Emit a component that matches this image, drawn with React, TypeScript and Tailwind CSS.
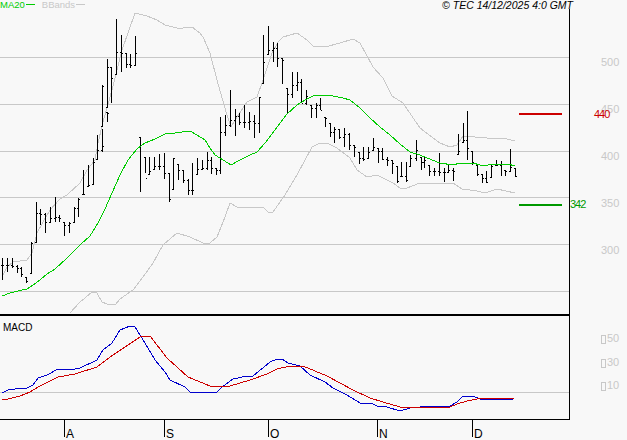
const FONT = "font-['Liberation_Sans',Arial,sans-serif]";

/* x, high, low, close */
const BARS: number[][] = [
  [2, 258, 280, 265], [7, 258, 272, 265], [12, 258, 268, 266], [17, 265, 273, 268], [21, 267, 277, 274], [26, 277, 283, 281],
  [31, 242, 274, 243], [36, 202, 243, 213], [40, 209, 225, 214], [45, 213, 233, 222], [50, 207, 223, 218], [55, 197, 222, 217],
  [59, 215, 222, 218], [64, 222, 236, 225], [69, 222, 233, 223], [74, 207, 223, 208], [78, 198, 217, 199], [83, 170, 195, 194],
  [88, 165, 187, 185], [93, 158, 185, 162], [97, 135, 160, 150], [102, 129, 152, 146], [102, 85, 127, 86], [107, 112, 122, 113],
  [107, 59, 108, 67], [111, 67, 103, 78], [116, 19, 75, 52], [121, 35, 72, 53], [126, 53, 68, 64], [130, 54, 68, 65], [135, 36, 66, 53],
  [140, 137, 192, 145], [145, 157, 173, 178], [149, 157, 175, 171], [154, 157, 170, 166], [159, 154, 170, 166], [164, 153, 179, 173],
  [169, 173, 202, 199], [173, 158, 190, 158], [178, 164, 180, 170], [183, 170, 183, 180], [188, 179, 195, 190], [192, 163, 195, 190],
  [197, 158, 175, 169], [202, 160, 170, 168], [207, 152, 170, 160],
  [211, 157, 174, 168], [216, 168, 175, 170], [220, 117, 174, 132], [225, 115, 136, 125], [230, 90, 127, 120], [235, 109, 136, 116],
  [239, 113, 125, 122], [244, 105, 128, 122], [249, 112, 130, 121], [254, 115, 138, 123], [259, 97, 133, 97], [263, 35, 84, 62],
  [268, 26, 55, 50], [273, 42, 62, 48], [277, 43, 67, 58], [282, 58, 84, 60], [287, 88, 114, 94], [292, 72, 98, 85], [297, 72, 91, 82],
  [301, 79, 103, 103], [306, 90, 105, 96], [311, 105, 118, 108], [316, 103, 118, 105], [320, 98, 110, 110], [325, 117, 127, 118],
  [330, 123, 137, 132], [334, 127, 143, 129], [339, 129, 139, 137], [344, 128, 147, 134], [349, 133, 150, 145], [354, 145, 157, 147],
  [359, 152, 164, 158], [363, 147, 161, 159], [368, 147, 159, 152], [373, 138, 151, 147], [378, 148, 163, 151], [382, 148, 160, 159],
  [387, 157, 166, 160], [392, 160, 174, 163], [397, 166, 183, 181], [401, 162, 177, 176], [406, 162, 182, 180], [410, 155, 167, 158],
  [416, 140, 161, 150], [421, 157, 170, 162], [424, 157, 168, 160], [429, 165, 176, 171], [434, 168, 176, 171], [439, 153, 176, 172],
  [444, 168, 182, 172], [448, 165, 173, 170], [453, 168, 181, 171], [458, 134, 155, 151], [463, 123, 143, 140], [467, 111, 160, 148],
  [472, 151, 165, 162], [477, 165, 176, 174], [482, 174, 183, 178], [486, 171, 183, 182], [491, 165, 178, 166], [496, 160, 166, 165],
  [501, 161, 176, 164], [505, 170, 176, 171], [510, 149, 172, 167], [515, 168, 177, 176],
];

const MA20 = "2,296 10,293 18,291 27,289 33,285 40,280 47,274 55,269 67,258 80,245 90,236 98,223 105,209 112,193 120,175 128,160 137,149 145,143 155,139 165,134 175,133 190,131 197,135 205,140 210,148 215,155 220,158 231,165 240,160 250,155 257,152 265,143 275,130 287,114 297,105 307,99 313,96 323,95 333,96 343,98 350,100 360,108 370,118 380,127 390,135 400,144 410,152 420,155 427,158 440,163 453,165 460,163 473,163 480,165 488,165 495,164 508,164 515,166";
const BB_UP = "2,277 7,267 13,262 27,260 32,253 37,233 43,222 50,210 60,199 67,195 80,183 87,170 95,160 98,143 103,122 112,90 122,50 135,13 147,16 157,20 165,25 177,28 183,28 192,27 200,33 203,37 210,53 217,80 227,115 231,127 237,117 247,102 257,97 263,80 272,53 278,42 283,37 297,33 307,40 313,46 325,47 340,43 353,39 360,43 373,67 383,78 392,96 403,103 420,128 440,143 450,147 457,145 463,136 487,138 503,138 515,141";
const BB_LOW = "70,313 80,302 85,298 92,292 97,293 102,302 107,304 115,305 120,299 133,290 143,277 153,263 163,245 177,233 190,237 203,243 210,243 217,237 225,217 230,203 237,207 250,208 263,207 268,212 273,212 285,195 297,175 305,160 312,147 320,143 327,143 337,148 350,158 357,170 367,177 377,175 393,183 400,188 407,188 420,183 440,183 453,183 462,189 477,191 485,193 497,189 515,193";
const MACD_BLUE = "2,393 8,390 15,389 27,388 33,385 38,378 47,375 58,369 70,370 80,368 97,360 103,350 112,343 120,330 130,326 135,327 145,343 155,360 165,372 170,380 185,387 190,392 217,392 222,387 233,379 247,376 253,376 270,362 277,359 282,359 288,363 300,366 310,375 325,382 333,388 347,395 360,403 373,404 377,406 387,407 400,411 410,408 420,407 450,406 457,402 462,397 473,396 480,399 513,399";
const MACD_RED = "2,399 8,399 20,396 30,392 38,387 58,377 75,374 97,367 110,357 128,345 140,337 150,336 167,358 188,377 210,386 217,387 230,386 250,380 267,374 277,369 290,366 303,366 327,376 353,390 370,398 383,402 400,407 420,407 450,407 457,404 467,401 477,399 515,398";

const MONTHS = [
  { label: "A", width: "w-[100px]" },
  { label: "S", width: "w-[104px]" },
  { label: "O", width: "w-[109px]" },
  { label: "N", width: "w-[95px]" },
  { label: "D", width: "w-[60px]" },
];

function Line({ points, color }: { points: string; color: string }) {
  return <polyline points={points} fill="none" stroke={color} strokeWidth={1} shapeRendering="crispEdges" />;
}

function PriceChart() {
  return (
    <svg width={569} height={305} viewBox="0 9 569 305" className="block" shapeRendering="crispEdges">
      {[57, 104, 151, 197, 244, 291].map((y) => (
        <rect key={y} x={0} y={y} width={569} height={1} fill="#c8c8c8" />
      ))}
      <Line points={BB_UP} color="#c8c8c8" />
      <Line points={BB_LOW} color="#c8c8c8" />
      {BARS.map(([x, hi, lo, close], i) => {
        const prev = i > 0 ? BARS[i - 1][3] : close;
        const open = Math.min(lo - 1, Math.max(hi, prev));
        return (
          <g key={i} fill="#000000">
            <rect x={x} y={hi} width={1} height={lo - hi} />
            <rect x={x - 1} y={open} width={1} height={1} />
            <rect x={x + 1} y={close} width={1} height={1} />
          </g>
        );
      })}
      <Line points={MA20} color="#00cc00" />
      <rect x={519} y={113} width={43} height={2} fill="#cc0000" />
      <rect x={519} y={204} width={43} height={2} fill="#009900" />
    </svg>
  );
}

function MacdChart() {
  return (
    <svg width={569} height={103} viewBox="0 316 569 103" className="block" shapeRendering="crispEdges">
      <rect x={0} y={392} width={569} height={1} fill="#c8c8c8" />
      <Line points={MACD_BLUE} color="#0000cc" />
      <Line points={MACD_RED} color="#cc0000" />
    </svg>
  );
}

function MacdLabel({ text }: { text: string }) {
  return (
    <div className="flex h-[23.5px] items-center pl-[31px]">
      <span className="mr-[1px] mt-[2px] h-[9px] w-[5px] border border-[#c8c8c8]" />
      <span>{text}</span>
    </div>
  );
}

export default function App() {
  return (
    <div className={`h-[440px] w-[627px] overflow-hidden bg-[#f8f8f8] text-[10px] leading-none ${FONT}`}>
      {/* Legend + copyright */}
      <div className="flex h-[9px] items-start justify-between pr-[54px]">
        <div className="flex items-center text-[9.5px]">
          <span className="text-[#00cc00]">MA20</span>
          <span className="ml-[1px] h-[1px] w-[9px] bg-[#00cc00]" />
          <span className="ml-[7px] text-[#c8c8c8]">BBands</span>
          <span className="ml-[1px] h-[1px] w-[9px] bg-[#c8c8c8]" />
        </div>
        <span className="text-[10.5px] italic text-black">© TEC 14/12/2025 4:0 GMT</span>
      </div>

      <div className="flex">
        <div className="w-[570px]">
          <div className="border-r border-b-2 border-black">
            <PriceChart />
          </div>
          <div className="relative border-r border-b border-black">
            <MacdChart />
            <span className="absolute left-[3px] top-[7px] text-black">MACD</span>
          </div>
          <div className="flex pl-[64px] text-black">
            {MONTHS.map((m) => (
              <div key={m.label} className={`h-[17px] border-l border-black ${m.width}`}>
                <span className="ml-[1px] block pt-[8px] text-[12px]">{m.label}</span>
              </div>
            ))}
          </div>
        </div>

        {/* Right axis */}
        <div className="relative w-[57px] text-[11px] text-[#c8c8c8]">
          <div className="pt-[30px]">
            {["500", "450", "400", "350", "300"].map((v) => (
              <div key={v} className="flex h-[47px] items-center pl-[31px]">
                {v}
              </div>
            ))}
          </div>
          <div className="mt-[53px]">
            {["50", "30", "10"].map((v) => (
              <MacdLabel key={v} text={v} />
            ))}
          </div>
          <span className="absolute left-[24px] top-[100px] tracking-[-1px] text-[#cc0000]">440</span>
          <span className="absolute left-[0px] top-[190px] tracking-[-1px] text-[#009900]">342</span>
        </div>
      </div>
    </div>
  );
}
